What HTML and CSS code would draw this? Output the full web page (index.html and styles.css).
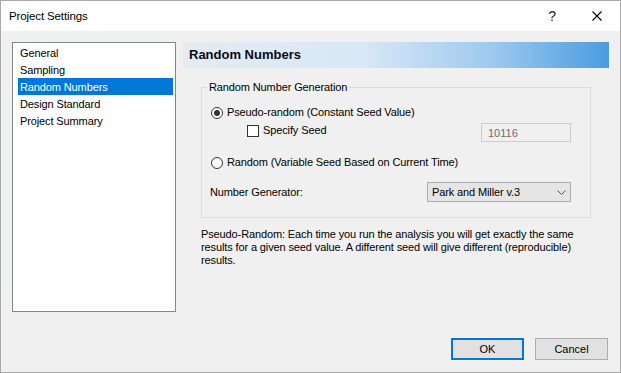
FILE: index.html
```html
<!DOCTYPE html>
<html lang="en">
<head>
    <meta charset="UTF-8">
    <meta name="viewport" content="width=device-width, initial-scale=1.0">
    <title>Project Settings</title>
    <link rel="stylesheet" href="styles.css">
</head>
<body>
    <div class="window">
        <div class="titlebar">
            <span class="title">Project Settings</span>
            <span class="help">?</span>
            <svg class="close" width="10" height="10" viewBox="0 0 10 10">
                <path d="M0.5 0.5 L9.5 9.5 M9.5 0.5 L0.5 9.5" stroke="#000" stroke-width="1.1" fill="none"/>
            </svg>
        </div>

        <div class="main">
            <ul class="pages">
                <li>General</li>
                <li>Sampling</li>
                <li class="selected">Random Numbers</li>
                <li>Design Standard</li>
                <li>Project Summary</li>
            </ul>

            <div class="panel">
                <div class="banner">Random Numbers</div>

                <fieldset class="group">
                    <legend>Random Number Generation</legend>
                    <div class="row">
                        <span class="radio checked"></span>
                        <span class="label">Pseudo-random (Constant Seed Value)</span>
                    </div>
                    <div class="row seed-row">
                        <span class="check"></span>
                        <span class="label">Specify Seed</span>
                        <input class="seed-box" type="text" value="10116" disabled>
                    </div>
                    <div class="row radio-row">
                        <span class="radio"></span>
                        <span class="label">Random (Variable Seed Based on Current Time)</span>
                    </div>
                    <div class="row gen-row">
                        <span class="label">Number Generator:</span>
                        <div class="combo">
                            <span>Park and Miller v.3</span>
                            <svg width="9" height="5" viewBox="0 0 9 5">
                                <path d="M0.5 0.5 L4.5 4.5 L8.5 0.5" stroke="#555" stroke-width="1" fill="none"/>
                            </svg>
                        </div>
                    </div>
                </fieldset>

                <p class="note">Pseudo-Random: Each time you run the analysis you will get exactly the same results for a given seed value. A different seed will give different (reproducible) results.</p>
            </div>
        </div>

        <div class="footer">
            <button class="btn default">OK</button>
            <button class="btn">Cancel</button>
        </div>
    </div>
</body>
</html>
```

FILE: styles.css
```css
* {
    margin: 0;
    padding: 0;
    box-sizing: border-box;
}

body {
    font-family: 'Liberation Sans', Arial, sans-serif;
    font-size: 11px;
    letter-spacing: -0.12px;
    color: #000;
    background: #f0f0f0;
}

.window {
    width: 621px;
    height: 373px;
    border: 1px solid #aaaaaa;
    background: #f0f0f0;
}

/* title bar */
.titlebar {
    height: 30px;
    background: #ffffff;
    display: flex;
    align-items: center;
    padding: 0 18px 0 8px;
}

.title {
    flex-grow: 1;
    font-size: 11.5px;
}

.help {
    font-size: 14px;
    color: #222;
    margin-right: 36px;
}

.close {
    display: block;
}

/* body */
.main {
    display: flex;
    height: 281px;
    padding: 11px 0 0 11px;
}

.pages {
    list-style: none;
    width: 164px;
    height: 270px;
    border: 1px solid #828790;
    background: #ffffff;
    padding: 1px 2px 0 5px;
}

.pages li {
    height: 17px;
    line-height: 18px;
    padding-left: 2px;
}

.pages li.selected {
    background: #0078d7;
    color: #ffffff;
}

.panel {
    width: 426px;
    margin-left: 7px;
}

.banner {
    height: 26px;
    line-height: 26px;
    padding-left: 6px;
    font-size: 13px;
    font-weight: bold;
    letter-spacing: 0;
    color: #0a0a14;
    background: linear-gradient(to right, #e4ebf3 0%, #d8e8f6 42%, #9fcaee 72%, #4a9ce0 100%);
}

/* group box */
.group {
    margin: 12px 18px 0 18px;
    border: 1px solid #dcdcdc;
    padding: 10px 19px 15px 8px;
}

.group legend {
    margin-left: -3px;
    padding: 0 2px;
    line-height: 14px;
}

.row {
    display: flex;
    align-items: center;
    height: 17px;
}

.label {
    line-height: 17px;
}

.radio {
    width: 12px;
    height: 12px;
    border: 1px solid #333333;
    border-radius: 50%;
    background: #ffffff;
    margin: 0 4px 0 1px;
    display: flex;
    align-items: center;
    justify-content: center;
}

.radio.checked::after {
    content: '';
    width: 6px;
    height: 6px;
    border-radius: 50%;
    background: #333333;
}

.seed-row {
    align-items: flex-start;
    height: 20px;
    margin-top: 1px;
}

.check {
    width: 12px;
    height: 12px;
    border: 1px solid #333333;
    background: #ffffff;
    margin: 3px 4px 0 37px;
}

.seed-box {
    margin-left: auto;
    margin-top: 1px;
    width: 90px;
    height: 19px;
    border: 1px solid #cccccc;
    background: #f0f0f0;
    color: #6d6d6d;
    font-family: inherit;
    font-size: 11px;
    padding-left: 6px;
    outline: none;
}

.radio-row {
    margin-top: 12px;
}

.gen-row {
    margin-top: 11px;
    height: 20px;
}

.combo {
    margin-left: auto;
    width: 144px;
    height: 20px;
    border: 1px solid #adadad;
    background: #e5e5e5;
    display: flex;
    align-items: center;
    justify-content: space-between;
    padding: 0 4px 0 4px;
}

.combo svg {
    display: block;
    margin-top: 1px;
}

.note {
    margin: 10px 14px 0 18px;
    line-height: 13px;
}

/* buttons */
.footer {
    display: flex;
    justify-content: flex-end;
    gap: 11px;
    margin-top: 26px;
    padding-right: 12px;
}

.btn {
    width: 73px;
    height: 22px;
    border: 1px solid #adadad;
    background: #e1e1e1;
    font-family: inherit;
    font-size: 11px;
    color: #000;
}

.btn.default {
    border: 2px solid #0078d7;
}
```
